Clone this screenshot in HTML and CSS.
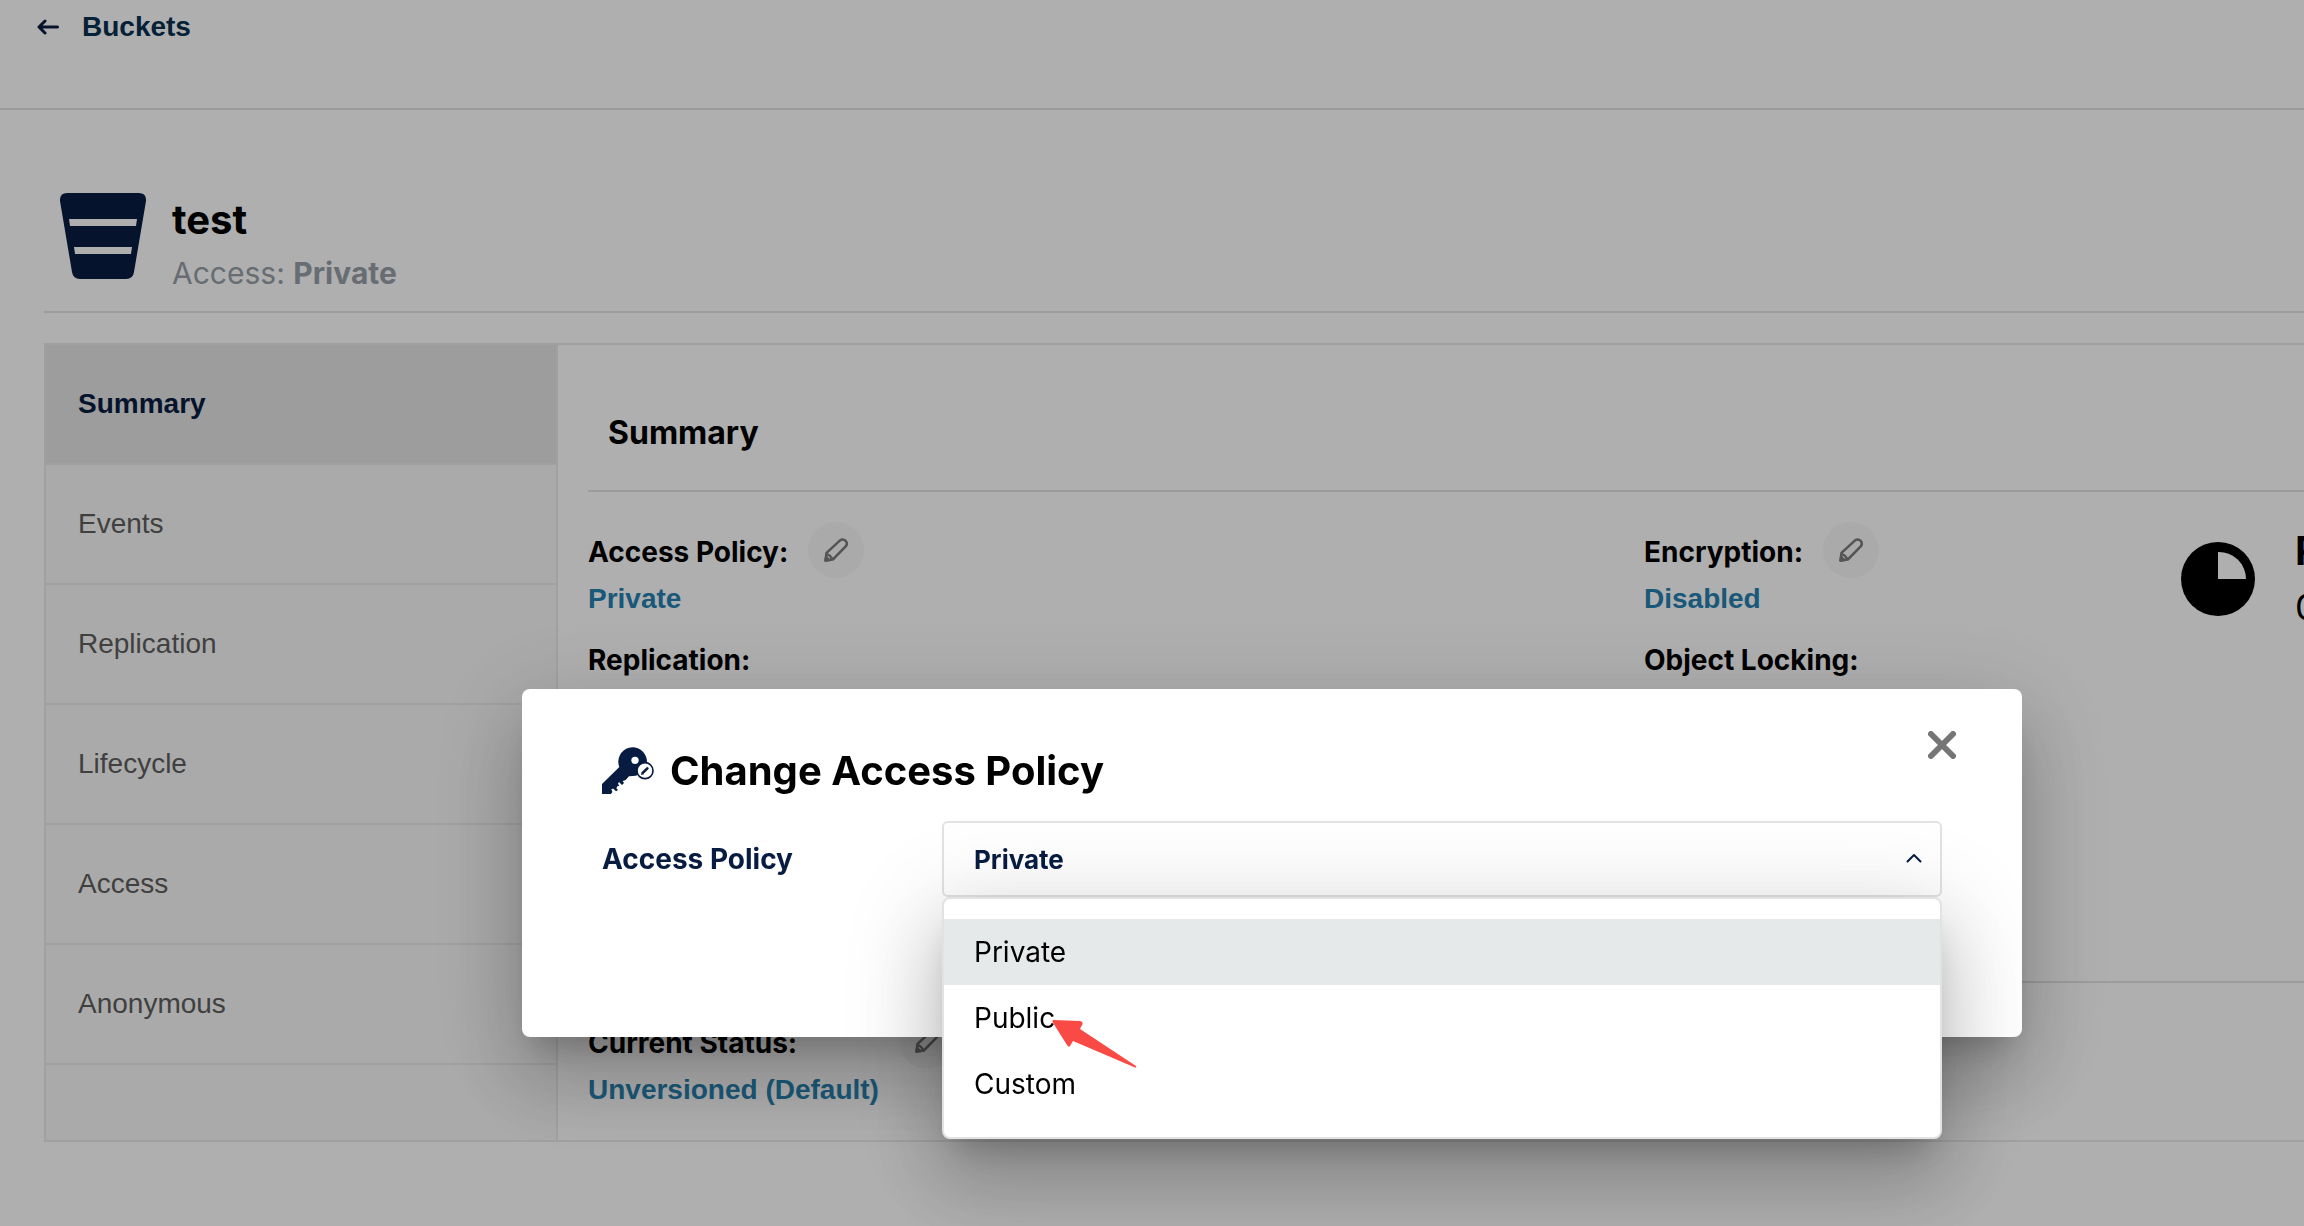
FILE: index.html
```html
<!DOCTYPE html>
<html lang="en">
<head>
<meta charset="utf-8">
<title>test - Buckets</title>
<link rel="stylesheet" href="styles.css">
</head>
<body>
<svg class="sprite" aria-hidden="true">
  <symbol id="pencil" viewBox="0 0 24 24">
    <path d="M1.500 22.500 L2.500 14.800 L15.800 2.600 Q19 .2 21.800 3 Q24 5.800 21.500 8.600 L8.800 21.500 Z M2.500 15.500 L4 16.500 Q6.500 17.800 7.500 20 L8.500 21.500"/>
    <path d="M1.500 22.500 L2.300 19 L5 22 Z"/>
  </symbol>
</svg>

<header class="topbar">
  <a class="back" href="#">
    <svg class="back-icon" viewBox="0 0 22 16" aria-hidden="true"><path d="M20.500 8H2M8 2L2 8l6 6"/></svg>
    Buckets
  </a>
</header>

<main class="page">
  <div class="bucket-head">
    <svg class="bucket-icon" viewBox="0 0 86 86" aria-hidden="true">
      <path class="fill" d="M7 0H79Q86.500 0 86 8L74 79Q73 86 66 86H20Q13 86 12 79L0 8Q-.5 0 7 0Z"/>
      <path class="gap" d="M9 26H77L76 33H10ZM14 54H72L71 61H15Z"/>
    </svg>
    <div>
      <h1 class="bucket-name">test</h1>
      <p class="bucket-access">Access: <b>Private</b></p>
    </div>
  </div>

  <div class="tabs">
    <nav class="tab-list">
      <a class="tab active" href="#">Summary</a>
      <a class="tab" href="#">Events</a>
      <a class="tab" href="#">Replication</a>
      <a class="tab" href="#">Lifecycle</a>
      <a class="tab" href="#">Access</a>
      <a class="tab" href="#">Anonymous</a>
    </nav>
    <div class="panel">
      <h2 class="panel-title">Summary</h2>
      <section class="details">
        <div class="column">
          <div class="field">
            <div class="stack"><span class="label">Access Policy:</span><a class="value" href="#">Private</a></div>
            <button class="edit" type="button" aria-label="Edit access policy"><svg><use href="#pencil"/></svg></button>
          </div>
          <div class="field">
            <div class="stack"><span class="label">Replication:</span></div>
          </div>
        </div>
        <div class="column">
          <div class="field">
            <div class="stack"><span class="label">Encryption:</span><a class="value" href="#">Disabled</a></div>
            <button class="edit" type="button" aria-label="Edit encryption"><svg><use href="#pencil"/></svg></button>
          </div>
          <div class="field">
            <div class="stack"><span class="label">Object Locking:</span></div>
          </div>
        </div>
        <div class="usage">
          <svg class="pie" viewBox="0 0 74 74" aria-hidden="true">
            <circle cx="37" cy="37" r="37"/>
            <path class="slice" d="M37 37V10A27 27 0 0 1 65 37Z"/>
          </svg>
          <div class="usage-text"><b class="usage-title">Reported Usage:</b><span class="usage-value">0.0 B</span></div>
        </div>
      </section>
      <section class="versioning">
        <div class="field">
          <div class="stack"><span class="label">Current Status:</span><a class="value" href="#">Unversioned (Default)</a></div>
          <button class="edit" type="button" aria-label="Edit versioning"><svg><use href="#pencil"/></svg></button>
        </div>
      </section>
    </div>
  </div>
</main>

<div class="backdrop">
  <div class="modal" role="dialog" aria-labelledby="modal-title">
    <button class="close" type="button" aria-label="Close"><svg viewBox="0 0 28 28"><path d="M3 3L25 25M25 3L3 25"/></svg></button>
    <h2 class="modal-title" id="modal-title">
      <svg class="key" viewBox="36 22 156 144" aria-hidden="true">
        <path class="navy" d="M36 133L88 82A43 43 0 1 1 128 109L117 110 107 121 98 124 102 130 96 136 92 132 87 127 84 132 88 138 82 140 79 146 84 151 78 155 70 147 64 148 67 157 63 163H36Z"/>
        <circle class="white" cx="135" cy="62" r="11"/>
        <circle class="ring" cx="165" cy="93" r="24"/>
        <path class="mark" d="M159 99L172 86"/>
        <path class="navy" d="M153 106L155 97 162 104Z"/>
      </svg>
      Change Access Policy
    </h2>
    <div class="form-row">
      <label class="form-label" for="policy">Access Policy</label>
      <div class="select-wrap">
        <select class="select" id="policy">
          <option>Private</option>
          <option>Public</option>
          <option>Custom</option>
        </select>
        <svg class="chevron" viewBox="0 0 16 10" aria-hidden="true"><path d="M1.500 8.500L8 2l6.500 6.500"/></svg>
        <ul class="menu" role="listbox" aria-label="Access Policy">
          <li class="option selected" role="option" aria-selected="true">Private</li>
          <li class="option" role="option">Public
            <svg class="pointer" viewBox="0 0 85 48" aria-hidden="true"><path d="M1.500 0L28 1Q31 1.500 30.500 4L28 9 84 46Q85 48 83 47.500L21 21 18 26Q16.500 28 15 25L.5 2Q0 0 1.500 0Z"/></svg>
          </li>
          <li class="option" role="option">Custom</li>
        </ul>
      </div>
    </div>
  </div>
</div>
</body>
</html>
```

FILE: styles.css
```css
:root {
  --navy: #081c42;
  --line: #e3e3e3;
  --border: #eaeaea;
  --ui: Inter, "Liberation Sans", sans-serif;
  --plain: "Liberation Sans", Arial, sans-serif;
}

* { box-sizing: border-box; }

html, body { margin: 0; min-height: 100vh; }

body {
  background: #fff;
  color: #000;
  font-family: var(--ui);
  font-size: 28px;
  overflow: hidden;
}

h1, h2, p, ul { margin: 0; padding: 0; }
a { text-decoration: none; }
button { border: 0; padding: 0; background: none; }
svg { display: block; flex: none; }
.sprite { display: none; }

.topbar {
  height: 110px;
  padding: 8px 36px;
  border-bottom: 2px solid var(--line);
}
.back {
  display: inline-flex;
  align-items: center;
  gap: 22px;
  color: #073052;
  font: bold 28px/32px var(--plain);
}
.back-icon {
  width: 24px;
  height: 16px;
  fill: none;
  stroke: var(--navy);
  stroke-width: 3;
  stroke-linecap: round;
  stroke-linejoin: round;
}

.page { padding-left: 44px; }

.bucket-head {
  display: flex;
  gap: 26px;
  padding: 81px 0 14px 16px;
  border-bottom: 2px solid var(--line);
}
.bucket-icon { width: 86px; height: 88px; padding-top: 2px; }
.bucket-icon .fill { fill: var(--navy); }
.bucket-icon .gap { fill: #fff; }
.bucket-name { font-size: 40px; line-height: 58px; }
.bucket-access { font-size: 30px; line-height: 48px; color: #969fa8; }

.tabs {
  display: flex;
  margin-top: 30px;
  border: 2px solid var(--border);
  border-right: 0;
}
.tab-list {
  flex: none;
  width: 512px;
  background: #f8f8f8;
  border-right: 2px solid var(--border);
}
.tab {
  display: flex;
  align-items: center;
  height: 120px;
  padding-left: 32px;
  border-bottom: 2px solid var(--border);
  color: #5e5e5e;
  font-family: var(--plain);
}
.tab.active { background: #e5e5e5; color: var(--navy); font-weight: bold; }

.panel { flex: 1; min-width: 0; padding-left: 30px; }
.panel-title { padding: 68px 0 37px 20px; font-size: 32px; line-height: 40px; }

.details {
  display: grid;
  grid-template-columns: 2fr 1fr 132px;
  min-height: 491px;
  padding-top: 30px;
  border-top: 2px solid var(--line);
}
.versioning { padding: 30px 0 26px; border-top: 2px solid var(--line); }

.column { display: flex; flex-direction: column; gap: 7px; }
.field { display: flex; gap: 20px; align-items: flex-start; }
.stack { display: flex; flex-direction: column; padding-top: 8px; }
.label { font-weight: bold; line-height: 44px; }
.value { color: #2781b0; font: bold 28px/49px var(--plain); }
.edit {
  display: grid;
  place-items: center;
  width: 56px;
  height: 56px;
  border-radius: 50%;
  background: #f8f8f8;
}
.edit svg {
  width: 24px;
  height: 24px;
  fill: none;
  stroke: #7b7b7b;
  stroke-width: 2.5;
  stroke-linejoin: round;
}

.usage { display: flex; gap: 40px; padding-left: 9px; overflow: hidden; }
.pie { width: 74px; height: 94px; padding-top: 20px; }
.pie .slice { fill: #fff; }
.usage-text { display: flex; flex-direction: column; line-height: 57px; white-space: nowrap; }
.usage-title { font-size: 40px; }
.usage-value { font-size: 36px; }

.backdrop {
  position: fixed;
  inset: 0;
  display: flex;
  justify-content: center;
  align-items: flex-start;
  padding: 689px 0 0 240px;
  background: rgba(0, 0, 0, .314);
}
.modal {
  position: relative;
  width: 100%;
  max-width: 1500px;
  padding: 57px 80px 140px;
  border-radius: 8px;
  background: #fff;
}
.modal, .menu {
  box-shadow: 0 22px 30px -14px rgba(0, 0, 0, .2), 0 48px 76px 6px rgba(0, 0, 0, .14), 0 18px 92px 16px rgba(0, 0, 0, .12);
}
.close { position: absolute; top: 42px; right: 66px; width: 28px; height: 28px; }
.close svg { stroke: #757575; stroke-width: 6; stroke-linecap: round; }
.modal-title { display: flex; align-items: center; gap: 16px; font-size: 40px; line-height: 50px; }
.key { width: 52px; height: 48px; }
.navy { fill: #081c42; }
.white { fill: #fff; }
.ring { fill: #fff; stroke: #081c42; stroke-width: 5; }
.mark { stroke: #081c42; stroke-width: 8; stroke-linecap: round; }

.form-row {
  display: grid;
  grid-template-columns: 340px 1fr;
  align-items: center;
  margin-top: 25px;
}
.form-label { color: var(--navy); font-weight: bold; }
.select-wrap { position: relative; }
.select {
  display: block;
  width: 100%;
  height: 76px;
  padding: 2px 30px 0;
  appearance: none;
  border: 2px solid #e2e2e2;
  border-radius: 6px;
  background: #fff;
  color: var(--navy);
  font: bold 26px/40px var(--ui);
}
.chevron {
  position: absolute;
  top: 32px;
  right: 20px;
  width: 16px;
  height: 10px;
  fill: none;
  stroke: var(--navy);
  stroke-width: 2;
  stroke-linecap: round;
  stroke-linejoin: round;
}
.menu {
  position: absolute;
  top: 100%;
  left: 0;
  right: 0;
  padding: 20px 0;
  border: 2px solid #e2e2e2;
  border-radius: 8px;
  background: #fff;
  list-style: none;
}
.option { position: relative; padding-left: 30px; line-height: 66px; }
.option.selected { background: #e5e9ea; }
.pointer {
  position: absolute;
  top: 35px;
  left: 108px;
  width: 85px;
  height: 48px;
  z-index: 1;
  fill: #f94a46;
}
```
